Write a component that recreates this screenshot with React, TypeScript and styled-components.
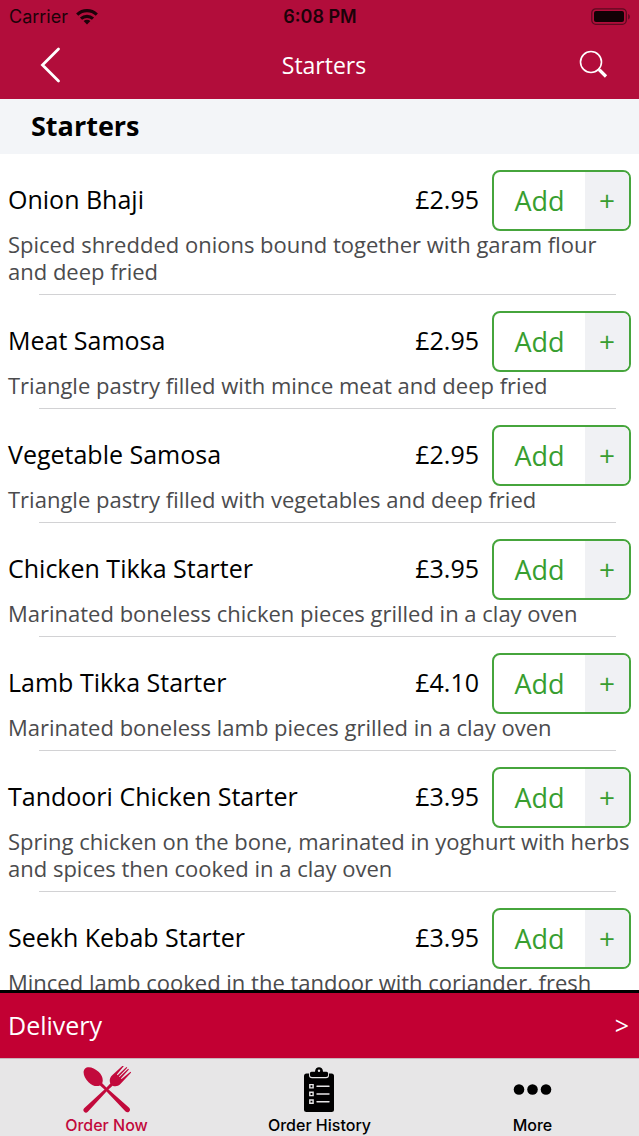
import React from "react";
import styled, { createGlobalStyle } from "styled-components";

const GlobalStyle = createGlobalStyle`
  * { box-sizing: border-box; }
  body { margin: 0; background: #fff; }
  button { border: 0; padding: 0; background: none; font: inherit; color: inherit; cursor: pointer; }
  h1, h2, h3, p { margin: 0; font-weight: 400; }
`;

const menuFont = `"Open Sans", "Noto Sans", sans-serif`;
const systemFont = `Inter, Roboto, sans-serif`;

const Screen = styled.div`
  display: flex;
  flex-direction: column;
  height: 100vh;
  color: #000;
  font-family: ${menuFont};
`;

const TopBar = styled.header`
  flex: none;
  background: #b20d3b;
`;

const StatusBar = styled.div`
  display: grid;
  grid-template-columns: 1fr auto 1fr;
  align-items: center;
  height: 33px;
  padding: 0 8px 0 9px;
  color: #1c0209;
  font-family: ${systemFont};
  font-size: 18px;
  line-height: 20px;
`;

const Carrier = styled.div`
  display: flex;
  align-items: center;
  gap: 8px;
`;

const Clock = styled.time`
  font-weight: 600;
`;

const BatteryIcon = styled.svg`
  justify-self: end;
`;

const NavBar = styled.nav`
  display: grid;
  grid-template-columns: 1fr auto 1fr;
  align-items: center;
  height: 66px;
  padding: 0 31px 3px 40px;
  color: #fff;
`;

const NavTitle = styled.h1`
  font-size: 23px;
  line-height: 30px;
`;

const NavButton = styled.button<{ $end?: boolean }>`
  display: flex;
  justify-self: ${(p) => (p.$end ? "end" : "start")};
`;

const MenuList = styled.main`
  flex: 1;
  min-height: 0;
  overflow-y: auto;
  scrollbar-width: none;
`;

const SectionTitle = styled.h2`
  height: 55px;
  padding: 0 31px;
  background: #f3f5f8;
  font-size: 27px;
  font-weight: 700;
  line-height: 53px;
`;

const Items = styled.ul`
  margin: 0;
  padding: 0;
  list-style: none;
`;

const Item = styled.li`
  padding-top: 16px;

  &::after {
    content: "";
    display: block;
    height: 1px;
    margin: 9px 23px 0 39px;
    background: #d2d2d4;
  }
`;

const ItemHead = styled.div`
  display: flex;
  align-items: center;
  gap: 13px;
  padding: 0 8px;
`;

const ItemName = styled.h3`
  flex: 1;
  padding-bottom: 3px;
  font-size: 25px;
  line-height: 32px;
`;

const Price = styled.span`
  padding-bottom: 3px;
  font-size: 25px;
  line-height: 32px;
`;

const AddButton = styled.button`
  display: flex;
  width: 139px;
  height: 61px;
  overflow: hidden;
  border: 2px solid #46a53c;
  border-radius: 8px;
  background: #fff;
  color: #389e30;
  line-height: 57px;
`;

const AddLabel = styled.span`
  flex: 1;
  font-size: 27px;
`;

const AddPlus = styled.span`
  width: 44px;
  background: #f0f1f4;
  font-size: 28px;
`;

const Description = styled.p`
  padding: 0 8px;
  color: #4b4b4d;
  font-size: 22px;
  line-height: 27px;
`;

const DeliveryBar = styled.button`
  display: flex;
  flex: none;
  align-items: center;
  justify-content: space-between;
  height: 68px;
  padding: 0 10px 2px 8px;
  border-top: 3px solid #000;
  background: #c20033;
  color: #fff;
  font-size: 25px;
  line-height: 32px;
`;

const TabBar = styled.nav`
  display: grid;
  flex: none;
  grid-template-columns: repeat(3, 1fr);
  height: 78px;
  border-top: 1px solid #c9b5bb;
  background: #e7e6e7;
`;

const Tab = styled.button<{ $active?: boolean }>`
  display: flex;
  flex-direction: column;
  align-items: center;
  justify-content: flex-end;
  gap: 1px;
  padding-bottom: 1px;
  color: ${(p) => (p.$active ? "#c20a3c" : "#000")};
  font-family: ${systemFont};
  font-size: 16px;
  font-weight: 500;
  line-height: 20px;
`;

const WifiIcon = () => (
  <svg width="22" height="16" viewBox="0 0 22 16" fill="none" stroke="currentColor" strokeWidth="3.2" aria-hidden="true">
    <path d="M1.2 5.6C6.8.4 15.2.4 20.8 5.6" />
    <path d="M5 9.6c3.5-3.1 8.5-3.1 12 0" />
    <path d="M11 15.5 7.6 12c2-1.8 4.8-1.8 6.8 0Z" fill="currentColor" stroke="none" />
  </svg>
);

const Battery = () => (
  <BatteryIcon width="40" height="18" viewBox="0 0 40 18" aria-hidden="true">
    <rect x="0.8" y="0.8" width="34.5" height="15.5" rx="4" fill="none" stroke="#5c0a20" strokeWidth="1.3" />
    <rect x="3" y="3" width="30" height="11" rx="2" fill="#120105" />
    <path d="M37.2 6v5.5c2.2-.8 2.2-4.7 0-5.5Z" fill="#5c0a20" />
  </BatteryIcon>
);

const BackIcon = () => (
  <svg width="22" height="36" viewBox="0 0 22 36" fill="none" stroke="#fff" strokeWidth="2.8" strokeLinecap="round" aria-hidden="true">
    <path d="M18.5 2 2.5 18l16 16" />
  </svg>
);

const SearchIcon = () => (
  <svg width="29" height="29" viewBox="0 0 29 29" fill="none" stroke="#fff" aria-hidden="true">
    <circle cx="12" cy="12" r="10.5" strokeWidth="1.6" />
    <path d="m19 19 2 2" strokeWidth="2" />
    <path d="m20.5 20 6.5 6.5" strokeWidth="3.2" />
  </svg>
);

const CutleryIcon = () => (
  <svg width="50" height="48" viewBox="0 0 50 48" fill="currentColor" aria-hidden="true">
    <g transform="translate(24.5 23.5) rotate(-46)">
      <path d="M0-30C4-30 7.200-24.500 7.200-18C7.200-12.500 5-9 1.600-7.500L1.300 0 2.600 29C2.600 32.500-2.600 32.500-2.600 29L-1.300 0-1.600-7.500C-5-9-7.200-12.500-7.200-18C-7.200-24.500-4-30 0-30Z" />
    </g>
    <g transform="translate(24.5 23.5) rotate(45)">
      <path d="M-5.4-29.500h1L-3.300-18h1L-1.700-30h1.100L-.4-18h.8L.6-30h1.100L2.300-18h1L4.400-29.500h1L6-14C6-10 4-8 1.600-7L1.300 0 2.600 29C2.600 32.500-2.600 32.500-2.600 29L-1.300 0-1.600-7C-4-8-6-10-6-14Z" />
    </g>
  </svg>
);

const ClipboardIcon = () => (
  <svg width="32" height="47" viewBox="0 0 32 47" aria-hidden="true">
    <rect x="0" y="6.5" width="30" height="38.5" rx="2.5" fill="#000" />
    <path d="M5 4v4q0 3.2 3 3.2h14q3 0 3-3.2V4Z" fill="#e7e6e7" />
    <path d="M7.5 4.7H11C11-1.200 19-1.200 19 4.700h3.500q1.600 0 1.600 1.500V8q0 2-2 2H7.900q-2 0-2-2V6.200q0-1.500 1.600-1.500Z" fill="#000" />
    <circle cx="15" cy="3.7" r="1.2" fill="#e7e6e7" />
    <g fill="none" stroke="#e7e6e7" strokeWidth="1.4">
      <path d="M5.8 17.600h3.300v3.300H5.800ZM5.800 25.300h3.300v3.300H5.800ZM5.800 33h3.300v3.300H5.800Z" />
      <path d="M13 19.300H25M13 27H25M13 34.700H25" strokeLinecap="round" />
    </g>
  </svg>
);

const MoreIcon = () => (
  <svg width="40" height="48" viewBox="0 0 40 48" aria-hidden="true">
    <circle cx="6" cy="23.5" r="5.3" />
    <circle cx="19.5" cy="23.5" r="5.3" />
    <circle cx="33" cy="23.5" r="5.3" />
  </svg>
);

const menu = [
  { name: "Onion Bhaji", price: "£2.95", description: "Spiced shredded onions bound together with garam flour and deep fried" },
  { name: "Meat Samosa", price: "£2.95", description: "Triangle pastry filled with mince meat and deep fried" },
  { name: "Vegetable Samosa", price: "£2.95", description: "Triangle pastry filled with vegetables and deep fried" },
  { name: "Chicken Tikka Starter", price: "£3.95", description: "Marinated boneless chicken pieces grilled in a clay oven" },
  { name: "Lamb Tikka Starter", price: "£4.10", description: "Marinated boneless lamb pieces grilled in a clay oven" },
  { name: "Tandoori Chicken Starter", price: "£3.95", description: "Spring chicken on the bone, marinated in yoghurt with herbs and spices then cooked in a clay oven" },
  { name: "Seekh Kebab Starter", price: "£3.95", description: "Minced lamb cooked in the tandoor with coriander, fresh" },
];

export default function App() {
  return (
    <Screen>
      <GlobalStyle />
      <TopBar>
        <StatusBar>
          <Carrier>
            Carrier
            <WifiIcon />
          </Carrier>
          <Clock>6:08 PM</Clock>
          <Battery />
        </StatusBar>
        <NavBar>
          <NavButton aria-label="Back">
            <BackIcon />
          </NavButton>
          <NavTitle>Starters</NavTitle>
          <NavButton $end aria-label="Search">
            <SearchIcon />
          </NavButton>
        </NavBar>
      </TopBar>
      <MenuList>
        <SectionTitle>Starters</SectionTitle>
        <Items>
          {menu.map((item) => (
            <Item key={item.name}>
              <ItemHead>
                <ItemName>{item.name}</ItemName>
                <Price>{item.price}</Price>
                <AddButton>
                  <AddLabel>Add</AddLabel>
                  <AddPlus>+</AddPlus>
                </AddButton>
              </ItemHead>
              <Description>{item.description}</Description>
            </Item>
          ))}
        </Items>
      </MenuList>
      <DeliveryBar>
        <span>Delivery</span>
        <span>&gt;</span>
      </DeliveryBar>
      <TabBar>
        <Tab $active>
          <CutleryIcon />
          Order Now
        </Tab>
        <Tab>
          <ClipboardIcon />
          Order History
        </Tab>
        <Tab>
          <MoreIcon />
          More
        </Tab>
      </TabBar>
    </Screen>
  );
}
